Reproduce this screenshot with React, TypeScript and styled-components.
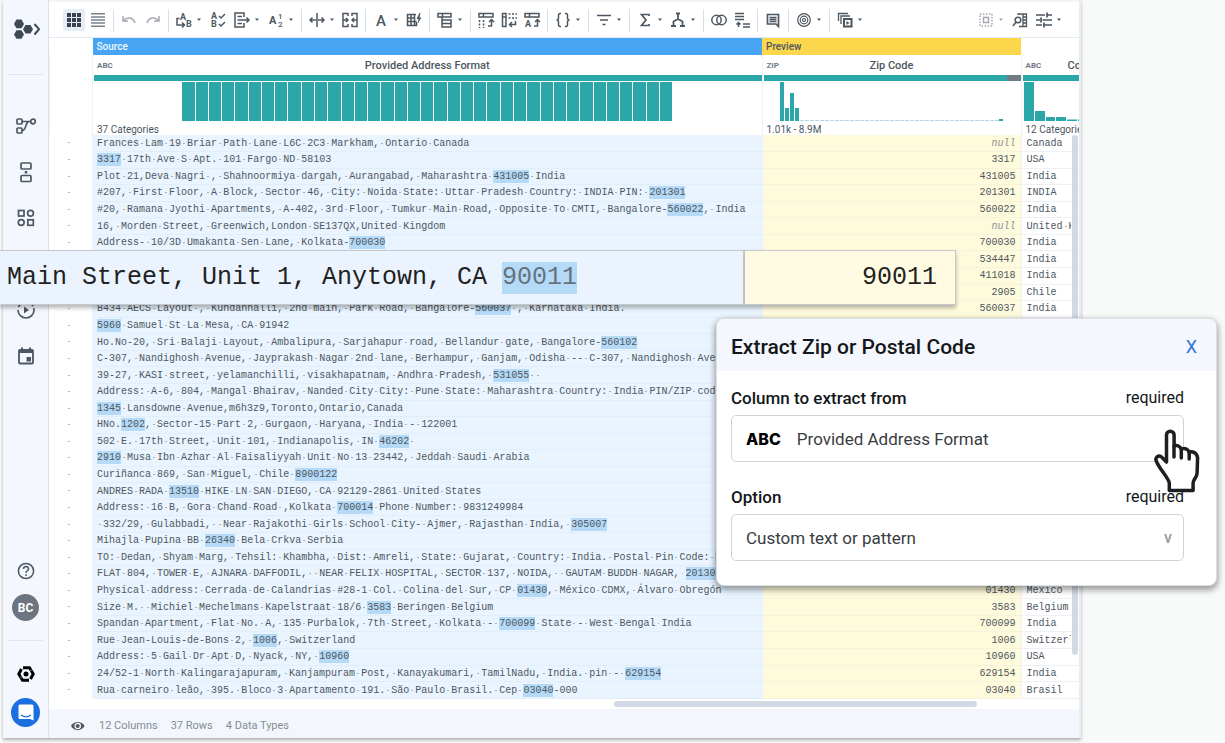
import React from 'react';
import styled, { createGlobalStyle } from 'styled-components';

const ink = '#4d5761';
const teal = '#2ca7a9';

const GlobalStyle = createGlobalStyle`
  * { box-sizing: border-box; }
  body { margin: 0; background: #f8f9f9; font-family: Roboto, sans-serif; color: ${ink}; overflow: hidden; }
  button { border: 0; background: none; padding: 0; font: inherit; color: inherit; cursor: pointer; }
`;

const Page = styled.div`
  position: relative;
  min-height: 100vh;
  padding: 0 144px 5px 3px;
  overflow: hidden;
`;

const AppWindow = styled.div`
  display: flex;
  background: #fff;
  border-right: 2px solid #e9edf2;
  box-shadow: 0 2px 3px rgba(0, 0, 0, 0.3);
`;

/* ---------- sidebar ---------- */

const Sidebar = styled.aside`
  display: flex;
  flex-direction: column;
  align-items: center;
  flex: 0 0 46px;
  padding: 16px 0 11px;
  background: #f4f8fe;
  border-right: 1px solid #d8e1ee;
`;

const LogoButton = styled.button`
  display: flex;
  height: 26px;
`;

const Divider = styled.hr<{ $top: number; $bottom: number }>`
  width: 34px;
  height: 1px;
  border: 0;
  background: #dfe5ec;
  margin: ${p => p.$top}px 0 ${p => p.$bottom}px;
`;

const Nav = styled.nav`
  display: flex;
  flex-direction: column;
`;

const NavButton = styled.button`
  display: flex;
  align-items: center;
  justify-content: center;
  width: 44px;
  height: 46px;
`;

const SidebarBottom = styled.div`
  display: flex;
  flex-direction: column;
  align-items: center;
  margin-top: auto;
`;

const RoundButton = styled.button<{ $size: number; $bg?: string }>`
  display: flex;
  align-items: center;
  justify-content: center;
  width: ${p => p.$size}px;
  height: ${p => p.$size}px;
  border-radius: 50%;
  background: ${p => p.$bg ?? 'transparent'};
  color: #fff;
  font-size: 12px;
  font-weight: 700;
`;

const HelpSlot = styled.div`
  margin-bottom: 13px;
`;

const BrandSlot = styled.div`
  margin-bottom: 12px;
`;

/* ---------- toolbar ---------- */

const Main = styled.main`
  flex: 1;
  min-width: 0;
  display: flex;
  flex-direction: column;
`;

const Toolbar = styled.div`
  display: flex;
  align-items: center;
  height: 38px;
  padding: 1px 17px 0 7px;
  border-top: 2px solid #f3f4f6;
  border-bottom: 1px solid #e3e9f0;
`;

const Group = styled.div<{ $gap?: number }>`
  display: flex;
  align-items: center;
  gap: ${p => p.$gap ?? 7}px;
  height: 23px;
  padding: 0 7px;
  border-right: 1px solid #d5e0ec;

  &:nth-last-child(2) {
    border-right: 0;
  }
`;

const EndGroup = styled.div`
  display: flex;
  align-items: center;
  gap: 8px;
  margin-left: auto;
`;

const Tool = styled.button<{ $active?: boolean; $dim?: boolean }>`
  display: flex;
  align-items: center;
  gap: 4px;
  height: 22px;
  padding: ${p => (p.$active ? '0 3px' : '0')};
  border-radius: 2px;
  background: ${p => (p.$active ? '#e7edf6' : 'transparent')};
  opacity: ${p => (p.$dim ? 0.5 : 1)};
`;

const IconSvg = styled.svg`
  display: block;
  overflow: visible;
`;

const Svg = ({ w = 16, h = 16, children }: { w?: number; h?: number; children: React.ReactNode }) => (
  <IconSvg width={w} height={h} viewBox={`0 0 ${w} ${h}`} fill="none" stroke={ink} strokeWidth="1.5" aria-hidden="true">
    {children}
  </IconSvg>
);

const Letter = ({ x, y, size = 9, weight = 700, children }: { x: number; y: number; size?: number; weight?: number; children: string }) => (
  <text x={x} y={y} fontSize={size} fontFamily="Roboto, sans-serif" fontWeight={weight} fill={ink} stroke="none">
    {children}
  </text>
);

const Caret = () => (
  <svg width="6" height="4" viewBox="0 0 6 4" aria-hidden="true">
    <path d="M1 0.5h4L3 3z" fill={ink} />
  </svg>
);

type ToolDef = { label: string; icon: React.ReactNode; menu?: boolean; active?: boolean; dim?: boolean };

const gridIcon = (
  <g fill="#39424c" stroke="none">
    {[1, 6, 11].map(y => [1, 6, 11].map(x => <rect key={`${x}-${y}`} x={x} y={y} width="4" height="4" />))}
  </g>
);

const toolGroups: { gap?: number; tools: ToolDef[] }[] = [
  {
    gap: 5,
    tools: [
      { label: 'Grid view', active: true, icon: gridIcon },
      { label: 'Column view', icon: <path d="M1 1.8h14M1 4.9h14M1 8h14M1 11.1h14M1 14.2h14" stroke="#7b838c" /> },
    ],
  },
  {
    gap: 8,
    tools: [
      { label: 'Undo', dim: true, icon: <path d="M2 4v5h5M2.5 8.5C6 4.5 12 5 14 11" /> },
      { label: 'Redo', dim: true, icon: <path d="M14 4v5H9M13.500 8.500C10 4.500 4 5 2 11" /> },
    ],
  },
  {
    gap: 8,
    tools: [
      { label: 'Rename', menu: true, icon: <><Letter x={4} y={8}>A</Letter><Letter x={10} y={15}>B</Letter><path d="M3.500 6.500H1V13h7M6 10.500 8.500 13 6 15.500" /></> },
      { label: 'Standardize', icon: <><Letter x={1} y={7}>A</Letter><Letter x={1} y={15}>B</Letter><path d="M9 4l2 2 4-4M9 12l2 2 4-4" /></> },
      { label: 'Extract', menu: true, icon: <path d="M10 5V1H1v14h9v-4M3.500 4.500H8M3.500 8H15M3.500 11.500H8M12.500 5.500 15 8l-2.500 2.500" /> },
      { label: 'Replace', menu: true, icon: <><Letter x={1} y={12} size={11}>A</Letter><Letter x={10} y={7} size={8} weight={500}>1</Letter><Letter x={10} y={15} size={8} weight={500}>2</Letter></> },
    ],
  },
  {
    tools: [
      { label: 'Split', menu: true, icon: <path d="M8 1v14M7 8H1M3.500 5.500 1 8l2.500 2.500M9 8h6M12.500 5.500 15 8l-2.500 2.500" /> },
      { label: 'Merge', icon: <path d="M6 4V1.500H1v13h5V12M1 8h5M4 6l2 2-2 2M10 4V1.500h5v13h-5V12M15 8h-5M12 6l-2 2 2 2" /> },
    ],
  },
  {
    tools: [
      { label: 'Format', menu: true, icon: <Letter x={3} y={14} size={15} weight={500}>A</Letter> },
      { label: 'Table tools', icon: <><path d="M10 2.500H1.500v11h9V10M1.500 6H9M1.500 9.500h9M5 2.500v11M8.500 2.500v11" /><path d="M13.500 1 10.500 7h2l-1 5 4-6.500h-2l1-4.500z" fill={ink} stroke="none" /></> },
    ],
  },
  { tools: [{ label: 'Group', menu: true, icon: <path d="M1 1.500h13V5H1zM5.500 1.500V5M5 8h9v3.500H5zM5 11.500h9V15H5zM5 5v3" /> }] },
  {
    tools: [
      { label: 'Pivot', icon: <><path d="M1 1.500h14V5H1zM5.500 1.500V5M10 14h3.500V8M11 10l2.500-2.500L16 10" /><path d="M1.500 8v8M5.500 8v8" strokeDasharray="2 1.500" /></> },
      { label: 'Unpivot', icon: <><path d="M1.500 1.500H5v13H1.500zM1.500 5H5M14.500 9v3.500H9M11 10l-2.500 2.500L11 15" /><path d="M7.500 2H16M7.500 6H16" strokeDasharray="2 1.500" /></> },
      { label: 'Transpose', icon: <><path d="M1 1.500h14V5H1zM5.500 1.500V5M10 14h3.500V8M11 10l2.500-2.500L16 10" /><Letter x={1} y={15}>A</Letter></> },
    ],
  },
  {
    tools: [{
      label: 'Objects', menu: true,
      icon: <path d="M6 1.500H5Q3.500 1.500 3.500 3V6Q3.500 8 1.500 8 3.500 8 3.500 10v3Q3.500 14.500 5 14.500H6M10 1.500h1Q12.500 1.500 12.500 3V6Q12.500 8 14.500 8 12.500 8 12.500 10v3Q12.500 14.500 11 14.500H10" />,
    }],
  },
  { tools: [{ label: 'Filter', menu: true, icon: <path d="M1 3.500h14M4 8h8M6.500 12.500h3" /> }] },
  {
    tools: [
      { label: 'Aggregate', menu: true, icon: <path d="M12 4V2.500H4.500L9 8l-4.500 5.500H12V12" strokeWidth="1.700" /> },
      { label: 'Conditions', menu: true, icon: <path d="M6 1.500h4M8 1.500V7M8 7 3.500 9.500V13M8 7l4.500 2.500V13M1 14h5M10 14h5" strokeWidth="1.800" /> },
    ],
  },
  {
    tools: [
      { label: 'Join', icon: <><circle cx="5.500" cy="8" r="4.700" /><circle cx="10.500" cy="8" r="4.700" /></> },
      { label: 'Union', icon: <path d="M1 1.500h9M1 4.500h9M1 7.500h9M4.500 15v-4.500M2.500 12.500l2-2 2 2M9 12h7M9 15h7" /> },
    ],
  },
  { tools: [{ label: 'Comment', icon: <path d="M2.500 2.500h11v12l-2.500-2.500h-8.500zM4.500 5.500h7M4.500 7.500h7M4.500 9.500h7" strokeWidth="1.700" /> }] },
  { tools: [{ label: 'Target', menu: true, icon: <g strokeWidth="1.200"><circle cx="8" cy="8" r="6.300" /><circle cx="8" cy="8" r="3.800" /><circle cx="8" cy="8" r="1.500" /></g> }] },
  {
    tools: [{
      label: 'Copies', menu: true,
      icon: <><path d="M1.500 9V1.500H11M4 12V4h9" strokeWidth="1.300" /><path d="M7 7h7.500v7.500H7z" strokeWidth="2" /><path d="M9.500 9v4l3-2z" fill={ink} stroke="none" /></>,
    }],
  },
];

const endTools: ToolDef[] = [
  { label: 'Select', menu: true, dim: true, icon: <><path d="M2 2h12v12H2z" strokeDasharray="1.500 1.500" /><path d="M5.500 5.500h5v5h-5z" /></> },
  { label: 'Find column', icon: <><path d="M6 3V2h8.500v12.500H7M11 2v12.500M11 5h3M11 8h3M11 11h3" strokeWidth="1.300" /><circle cx="6" cy="8" r="2.800" /><path d="M4 10 1 14" /></> },
  { label: 'Settings', menu: true, icon: <path d="M0 3h9M11 3h5M11 0.500v5M0 8h4M6.500 8H16M5 5.500v5M0 13h6M8.500 13H16M8 10.500v5" strokeWidth="1.700" /> },
];

const ToolItem = ({ t }: { t: ToolDef }) => (
  <Tool type="button" aria-label={t.label} $active={t.active} $dim={t.dim}>
    <Svg>{t.icon}</Svg>
    {t.menu && <Caret />}
  </Tool>
);

/* ---------- data grid ---------- */

const GridArea = styled.div`
  position: relative;
  overflow: hidden;
`;

const Grid = styled.table`
  width: 100%;
  height: 661px;
  table-layout: fixed;
  border-collapse: collapse;
`;

const Band = styled.th<{ $bg?: string; $fg?: string }>`
  height: 17px;
  padding: 0 4px;
  background: ${p => p.$bg ?? 'transparent'};
  color: ${p => p.$fg ?? ink};
  font-size: 10px;
  font-weight: 500;
  line-height: 16px;
  text-align: left;
`;

const ColumnHead = styled.th`
  height: 80px;
  padding: 0;
  border-left: 1px solid #eef1f5;
  vertical-align: top;
  text-align: left;
  font-weight: 400;
`;

const HeadTitle = styled.div<{ $clip?: boolean }>`
  display: grid;
  grid-template-columns: ${p => (p.$clip ? '42px auto' : '40px 1fr 40px')};
  align-items: center;
  height: 20px;
  padding: 0 4px;
  overflow: hidden;
  font-size: 11px;
  font-weight: 500;
  text-align: ${p => (p.$clip ? 'left' : 'center')};
  white-space: nowrap;
`;

const TypeTag = styled.span`
  font-size: 8px;
  font-weight: 700;
  text-align: left;
  color: #707a85;
`;

const Quality = styled.div<{ $missing?: boolean }>`
  height: 6px;
  border-left: 1px solid #fff;
  border-right: ${p => (p.$missing ? '14px solid #727b85' : '0')};
  background: ${teal};
`;

const Bars = styled.div`
  display: flex;
  align-items: flex-end;
  justify-content: center;
  gap: 1px;
  width: 490px;
  height: 40px;
  margin: 0 auto;
  padding-top: 1px;
`;

const Bar = styled.span`
  flex: 1;
  height: 100%;
  background: ${teal};
`;

const Chart = styled.svg`
  display: block;
  height: 40px;
`;

const Summary = styled.div`
  height: 14px;
  padding: 2px 0 0 4px;
  font-size: 10px;
  line-height: 14px;
  white-space: nowrap;
  overflow: hidden;
`;

type CellKind = 'gutter' | 'source' | 'zip' | 'country';

const cellLook: Record<CellKind, { bg: string; line: string; align: string; padding: string }> = {
  gutter: { bg: '#fff', line: '#fff', align: 'center', padding: '1px 3px 0 0' },
  source: { bg: '#e9f4fe', line: '#e0eefa', align: 'left', padding: '1px 8px 0 4px' },
  zip: { bg: '#fefadc', line: '#f6f3da', align: 'right', padding: '1px 5px 0 0' },
  country: { bg: '#fff', line: '#edf1f6', align: 'left', padding: '1px 8px 0 5px' },
};

const Cell = styled.td<{ $kind: CellKind }>`
  height: 16px;
  padding: ${p => cellLook[p.$kind].padding};
  overflow: hidden;
  white-space: pre;
  font-family: 'Liberation Mono', monospace;
  font-size: 10px;
  line-height: 14px;
  text-align: ${p => cellLook[p.$kind].align};
  background: ${p => cellLook[p.$kind].bg};
  border-bottom: 1px solid ${p => cellLook[p.$kind].line};
  border-left: ${p => (p.$kind === 'gutter' ? '0' : '1px solid #eef1f5')};
`;

const RowDot = styled.span`
  display: inline-block;
  width: 2px;
  height: 1px;
  vertical-align: middle;
  background: #b4b8be;
`;

const Clip = styled.div`
  overflow: hidden;
`;

const Match = styled.mark`
  display: inline-block;
  height: 13px;
  line-height: 13px;
  background: #b4daf7;
  color: inherit;
`;

const Space = styled.span`
  background: radial-gradient(circle at 50% 50%, #a9aec4 0 0.7px, transparent 1px);
`;

const Null = styled.i`
  color: #8b9096;
`;

const VerticalThumb = styled.div`
  position: absolute;
  top: 97px;
  right: 1px;
  bottom: 44px;
  width: 6px;
  border-radius: 3px;
  background: #d1d9e5;
`;

const ScrollStrip = styled.div`
  display: flex;
  justify-content: flex-end;
  align-items: center;
  height: 10px;
  padding-right: 102px;
`;

const HorizontalThumb = styled.div`
  width: 363px;
  height: 6px;
  border-radius: 3px;
  background: #d1d9e5;
`;

const Footer = styled.footer`
  display: flex;
  align-items: center;
  gap: 13px;
  height: 29px;
  padding: 4px 21px 0;
  background: #f3f7fd;
  font-size: 11px;
  color: #858d96;
`;

/* Source text marks the extracted part with square brackets. */
type Row = [source: string, zip: string, country: string];

const rows: Row[] = [
  ['Frances Lam 19 Briar Path Lane L6C 2C3 Markham, Ontario Canada', 'null', 'Canada'],
  ['[3317] 17th Ave S Apt. 101 Fargo ND 58103', '3317', 'USA'],
  ['Plot 21,Deva Nagri , Shahnoormiya dargah, Aurangabad, Maharashtra [431005] India', '431005', 'India'],
  ['#207, First Floor, A Block, Sector 46, City: Noida State: Uttar Pradesh Country: INDIA PIN: [201301]', '201301', 'INDIA'],
  ['#20, Ramana Jyothi Apartments, A-402, 3rd Floor, Tumkur Main Road, Opposite To CMTI, Bangalore-[560022], India', '560022', 'India'],
  ['16, Morden Street, Greenwich,London SE137QX,United Kingdom', 'null', 'United Kingdom'],
  ['Address- 10/3D Umakanta Sen Lane, Kolkata-[700030]', '700030', 'India'],
  ['', '534447', 'India'],
  ['', '411018', 'India'],
  ['', '2905', 'Chile'],
  ['B434 AECS Layout , Kundanhalli, 2nd main, Park Road, Bangalore-[560037] , Karnataka India.', '560037', 'India'],
  ['[5960] Samuel St La Mesa, CA 91942', '', ''],
  ['Ho.No-20, Sri Balaji Layout, Ambalipura, Sarjahapur road, Bellandur gate, Bangalore-[560102]', '', ''],
  ['C-307, Nandighosh Avenue, Jayprakash Nagar 2nd lane, Berhampur, Ganjam, Odisha -- C-307, Nandighosh Avenue', '', ''],
  ['39-27, KASI street, yelamanchilli, visakhapatnam, Andhra Pradesh, [531055]  ', '', ''],
  ['Address: A-6, 804, Mangal Bhairav, Nanded City City: Pune State: Maharashtra Country: India PIN/ZIP code', '', ''],
  ['[1345] Lansdowne Avenue,m6h3z9,Toronto,Ontario,Canada', '', ''],
  ['HNo.[1202], Sector-15 Part 2, Gurgaon, Haryana, India - 122001', '', ''],
  ['502 E. 17th Street, Unit 101, Indianapolis, IN [46202] ', '', ''],
  ['[2910] Musa Ibn Azhar Al Faisaliyyah Unit No 13 23442, Jeddah Saudi Arabia', '', ''],
  ['Curiñanca 869, San Miguel, Chile [8900122]', '', ''],
  ['ANDRES RADA [13510] HIKE LN SAN DIEGO, CA 92129-2861 United States', '', ''],
  ['Address: 16 B, Gora Chand Road ,Kolkata [700014] Phone Number: 9831249984', '', ''],
  [' 332/29, Gulabbadi,  Near Rajakothi Girls School City- Ajmer, Rajasthan India, [305007]', '', ''],
  ['Mihajla Pupina BB [26340] Bela Crkva Serbia', '', ''],
  ['TO: Dedan, Shyam Marg, Tehsil: Khambha, Dist: Amreli, State: Gujarat, Country: India. Postal Pin Code: [365]', '', ''],
  ['FLAT 804, TOWER E, AJNARA DAFFODIL,  NEAR FELIX HOSPITAL, SECTOR 137, NOIDA,  GAUTAM BUDDH NAGAR, [201305]', '', ''],
  ['Physical address: Cerrada de Calandrias #28-1 Col. Colina del Sur, CP [01430], México CDMX, Álvaro Obregón', '01430', 'Mexico'],
  ['Size M.  Michiel Mechelmans Kapelstraat 18/6 [3583] Beringen Belgium', '3583', 'Belgium'],
  ['Spandan Apartment, Flat No. A, 135 Purbalok, 7th Street, Kolkata - [700099] State - West Bengal India', '700099', 'India'],
  ['Rue Jean-Louis-de-Bons 2, [1006], Switzerland', '1006', 'Switzerland'],
  ['Address: 5 Gail Dr Apt D, Nyack, NY, [10960]', '10960', 'USA'],
  ['24/52-1 North Kalingarajapuram, Kanjampuram Post, Kanayakumari, TamilNadu, India. pin - [629154]', '629154', 'India'],
  ['Rua carneiro leão, 395. Bloco 3 Apartamento 191. São Paulo Brasil. Cep [03040]-000', '03040', 'Brasil'],
];

const Dotted = ({ text }: { text: string }) => (
  <>{text.split(/( |\[\w+\])/).map((part, i) =>
    part === ' ' ? <Space key={i}> </Space>
      : part.startsWith('[') ? <Match key={i}>{part.slice(1, -1)}</Match>
        : part)}</>
);

const DataGrid = () => (
  <GridArea>
    <Grid>
      <colgroup>
        <col style={{ width: 43 }} />
        <col />
        <col style={{ width: 259 }} />
        <col style={{ width: 58 }} />
      </colgroup>
      <thead>
        <tr>
          <Band />
          <Band $bg="#48a5f3" $fg="#eef7ff" scope="col">Source</Band>
          <Band $bg="#fcd64b" scope="col">Preview</Band>
          <Band />
        </tr>
        <tr>
          <ColumnHead />
          <ColumnHead scope="col">
            <HeadTitle><TypeTag>ABC</TypeTag>Provided Address Format</HeadTitle>
            <Quality />
            <Bars>{Array.from({ length: 37 }, (_, i) => <Bar key={i} />)}</Bars>
            <Summary>37 Categories</Summary>
          </ColumnHead>
          <ColumnHead scope="col">
            <HeadTitle><TypeTag>ZIP</TypeTag>Zip Code</HeadTitle>
            <Quality $missing />
            <Chart width="258" viewBox="0 0 258 40">
              <path d="M17 1h4v39h-4zM22 27h4v13h-4zM27 12h4v28h-4zM32 27h4v13h-4zM236 38h4v2h-4z" fill={teal} />
              <path d="M37 39.500H236" stroke="#b5d9e4" strokeDasharray="4 1" />
            </Chart>
            <Summary>1.01k - 8.9M</Summary>
          </ColumnHead>
          <ColumnHead scope="col">
            <HeadTitle $clip><TypeTag>ABC</TypeTag>Country</HeadTitle>
            <Quality />
            <Chart width="57" viewBox="0 0 57 40">
              <path d="M2 1h10v39H2zM13 30h10v10H13zM24 36h9v4h-9zM34 36h10v4H34zM45 38.500h10v1.500H45zM56 38.500h1v1.500h-1z" fill={teal} />
            </Chart>
            <Summary>12 Categories</Summary>
          </ColumnHead>
        </tr>
      </thead>
      <tbody>
        {rows.map(([source, zip, country], i) => (
          <tr key={i}>
            <Cell $kind="gutter"><RowDot /></Cell>
            <Cell $kind="source"><Dotted text={source} /></Cell>
            <Cell $kind="zip">{zip === 'null' ? <Null>null</Null> : zip}</Cell>
            <Cell $kind="country"><Clip><Dotted text={country} /></Clip></Cell>
          </tr>
        ))}
      </tbody>
    </Grid>
    <VerticalThumb />
  </GridArea>
);

/* ---------- magnified row ---------- */

const Magnifier = styled.section`
  position: absolute;
  top: 250px;
  left: 0;
  right: 269px;
  display: flex;
  height: 55px;
  border: 1px solid #c5c9cd;
  border-left: 0;
  box-shadow: 0 3px 4px rgba(0, 0, 0, 0.28);
  font-family: 'Liberation Mono', monospace;
  font-size: 25px;
  line-height: 54px;
  color: #222;
  white-space: pre;
`;

const MagnifiedSource = styled.div`
  flex: 1;
  padding-left: 7px;
  background: #ebf4fe;
`;

const MagnifiedZip = styled.div`
  flex: 0 0 212px;
  padding-right: 18px;
  border-left: 2px solid #c0c4c8;
  background: #fffbe2;
  text-align: right;
`;

const BigMatch = styled.mark`
  display: inline-block;
  height: 32px;
  line-height: 32px;
  background: #b4daf7;
  color: #66737f;
`;

/* ---------- dialog ---------- */

const Dialog = styled.form`
  position: absolute;
  top: 318px;
  right: 8px;
  width: 501px;
  border: 1px solid #dcdfe3;
  border-radius: 8px;
  background: #fff;
  box-shadow: 0 3px 6px 1px rgba(0, 0, 0, 0.38);
  overflow: hidden;
  color: #14171a;
`;

const DialogHeader = styled.header`
  display: flex;
  align-items: center;
  justify-content: space-between;
  height: 52px;
  padding: 3px 19px 0 14px;
  background: #f4f7fd;
`;

const DialogTitle = styled.h2`
  margin: 0;
  font-size: 21px;
  font-weight: 500;
`;

const CloseButton = styled.button`
  font-size: 18px;
  color: #2f74dc;
`;

const DialogBody = styled.div`
  display: flex;
  flex-direction: column;
  gap: 24px;
  padding: 16px 32px 24px 14px;
`;

const Field = styled.div`
  display: flex;
  flex-direction: column;
  gap: 6px;
`;

const FieldHead = styled.div`
  display: flex;
  justify-content: space-between;
  font-size: 16px;
  line-height: 22px;
`;

const FieldLabel = styled.label`
  font-size: 17px;
  font-weight: 500;
`;

const SelectBox = styled.div`
  display: flex;
  align-items: center;
  gap: 16px;
  height: 47px;
  padding: 0 11px 0 14px;
  border: 1px solid #d3d3d3;
  border-radius: 5px;
  font-size: 17px;
  color: #3a3d40;
`;

const Select = styled.select`
  appearance: none;
  flex: 1;
  border: 0;
  padding: 0;
  background: transparent;
  font: inherit;
  color: inherit;
`;

const TypeBadge = styled.b`
  font-family: Inter, sans-serif;
  font-size: 16px;
  font-weight: 800;
  color: #000;
`;

const SelectArrow = styled.span`
  font-size: 16px;
  font-weight: 500;
  color: #999;
`;

const Hand = styled.svg`
  position: absolute;
  top: 426px;
  right: 24px;
`;

export default function App() {
  return (
    <Page>
      <GlobalStyle />
      <AppWindow>
        <Sidebar>
          <LogoButton type="button" aria-label="Expand menu">
            <svg width="30" height="26" viewBox="0 0 30 26">
              <path d="M3 8 5.500 3.500h5L13 8l-2.500 4.300h-5zM3 18.500l2.500-4.300h5l2.500 4.300-2.500 4.300h-5zM12 13.200l2.500-4.300h5l2.500 4.300-2.500 4.300h-5z" fill="#3f4954" />
              <path d="M23.500 8l4.500 5.200-4.500 5.300" fill="none" stroke="#3f4954" strokeWidth="2" />
            </svg>
          </LogoButton>
          <Divider $top={32} $bottom={28} />
          <Nav>
            <NavButton type="button" aria-label="Flows">
              <Svg w={20} h={18}><g strokeWidth="1.700"><rect x="1" y="2" width="5" height="5" rx="1" /><rect x="1" y="11" width="5" height="5" rx="1" /><circle cx="17" cy="4.500" r="2.300" /><path d="M6 4.500h8.500M6 13.500c5 0 3-9 7-9" /></g></Svg>
            </NavButton>
            <NavButton type="button" aria-label="Plans">
              <Svg w={20} h={22}><g strokeWidth="1.700"><rect x="5" y="2" width="10" height="6" rx="1" /><rect x="5" y="14.500" width="10" height="6" rx="1" /><path d="M10 10v2.500" strokeWidth="2.500" /></g></Svg>
            </NavButton>
            <NavButton type="button" aria-label="Library">
              <Svg w={20} h={20}><g strokeWidth="1.700"><rect x="2.500" y="2.500" width="5.500" height="5.500" /><circle cx="14.500" cy="5.200" r="2.900" /><circle cx="5.200" cy="14.500" r="2.900" /><rect x="11.800" y="11.800" width="5.500" height="5.500" /></g></Svg>
            </NavButton>
            <NavButton type="button" aria-label="Data" />
            <NavButton type="button" aria-label="Jobs">
              <Svg w={20} h={20}><circle cx="10" cy="10" r="8" strokeDasharray="25 3 3 2 3 2 3 2 3 2" strokeWidth="1.700" /><path d="M8 6.500v7l5-3.500z" fill={ink} stroke="none" /></Svg>
            </NavButton>
            <NavButton type="button" aria-label="Schedules">
              <Svg w={18} h={20}><rect x="2" y="4" width="14" height="13.500" rx="1" strokeWidth="1.800" /><path d="M2 5.500h14" strokeWidth="3" /><path d="M5 1.500v3M13 1.500v3" strokeWidth="2" /><rect x="9.500" y="11" width="4.500" height="4.500" fill={ink} stroke="none" /></Svg>
            </NavButton>
          </Nav>
          <SidebarBottom>
            <HelpSlot>
              <RoundButton type="button" $size={20} aria-label="Help">
                <Svg w={20} h={20}><circle cx="10" cy="10" r="7.600" /><path d="M7.500 8c0-3.300 5-3.300 5 0 0 1.800-2.500 1.800-2.500 4M10 13.300v1.600" /></Svg>
              </RoundButton>
            </HelpSlot>
            <RoundButton type="button" $size={27} $bg="#6d7680">BC</RoundButton>
            <Divider $top={19} $bottom={21} />
            <BrandSlot>
              <RoundButton type="button" $size={24} aria-label="Company">
                <svg width="20" height="20" viewBox="0 0 20 20" fill="none" stroke="#000" strokeWidth="3">
                  <path d="M7 3.800h6.500l1.500 2.500M13 16.200H6.500L5 13.700M5.500 5 2.800 10l2 3.500M14.500 15l2.700-5-2-3.500" />
                  <circle cx="10" cy="10" r="2.500" fill="#000" stroke="none" />
                </svg>
              </RoundButton>
            </BrandSlot>
            <RoundButton type="button" $size={29} $bg="#1c6fe0" aria-label="Chat">
              <svg width="16" height="17" viewBox="0 0 16 17">
                <path d="M2 0.500h12a1.500 1.500 0 0 1 1.500 1.500v14.500L12 15H2a1.500 1.500 0 0 1-1.500-1.500V2A1.500 1.500 0 0 1 2 0.500z" fill="#fff" />
                <path d="M3 11c3 2.300 7 2.300 10 0" fill="none" stroke="#1c6fe0" strokeWidth="1.200" />
              </svg>
            </RoundButton>
          </SidebarBottom>
        </Sidebar>
        <Main>
          <Toolbar role="toolbar">
            {toolGroups.map((g, i) => (
              <Group key={i} $gap={g.gap}>{g.tools.map(t => <ToolItem key={t.label} t={t} />)}</Group>
            ))}
            <EndGroup>{endTools.map(t => <ToolItem key={t.label} t={t} />)}</EndGroup>
          </Toolbar>
          <DataGrid />
          <ScrollStrip><HorizontalThumb /></ScrollStrip>
          <Footer>
            <svg width="16" height="12" viewBox="0 0 16 12">
              <path d="M1 6C3.500 0.500 12 0.500 14.500 6 12 11.500 3.500 11.500 1 6z" fill={ink} />
              <circle cx="7.700" cy="6" r="2.700" fill="none" stroke="#fff" strokeWidth="1.200" />
            </svg>
            <span>12 Columns</span>
            <span>37 Rows</span>
            <span>4 Data Types</span>
          </Footer>
        </Main>
      </AppWindow>

      <Magnifier>
        <MagnifiedSource>Main Street, Unit 1, Anytown, CA <BigMatch>90011</BigMatch></MagnifiedSource>
        <MagnifiedZip>90011</MagnifiedZip>
      </Magnifier>

      <Dialog>
        <DialogHeader>
          <DialogTitle>Extract Zip or Postal Code</DialogTitle>
          <CloseButton type="button" aria-label="Close">X</CloseButton>
        </DialogHeader>
        <DialogBody>
          <Field>
            <FieldHead><FieldLabel htmlFor="column">Column to extract from</FieldLabel><span>required</span></FieldHead>
            <SelectBox>
              <TypeBadge>ABC</TypeBadge>
              <Select id="column"><option>Provided Address Format</option></Select>
            </SelectBox>
          </Field>
          <Field>
            <FieldHead><FieldLabel htmlFor="option">Option</FieldLabel><span>required</span></FieldHead>
            <SelectBox>
              <Select id="option"><option>Custom text or pattern</option></Select>
              <SelectArrow>v</SelectArrow>
            </SelectBox>
          </Field>
        </DialogBody>
      </Dialog>
      <Hand width="48" height="68" viewBox="-1 -2 48 68" fill="#fff" stroke="#1d1f21" strokeWidth="3.500" strokeLinejoin="round" strokeLinecap="round">
        <path d="M12.500 34V7a3.800 3.800 0 0 1 7.600 0v11c3-1 6 0 7 3 3.500-1.500 7 0 8 3 4-1 8 1 8.500 6l-.5 15c0 5-4 6-4 10v7.500H15.300V55C14 49 6 42 2.500 33.500c-2-4 2-7 5-4.500z" />
        <path d="M20 18v11M27.300 21v9M35.200 24v7" fill="none" />
      </Hand>
    </Page>
  );
}
